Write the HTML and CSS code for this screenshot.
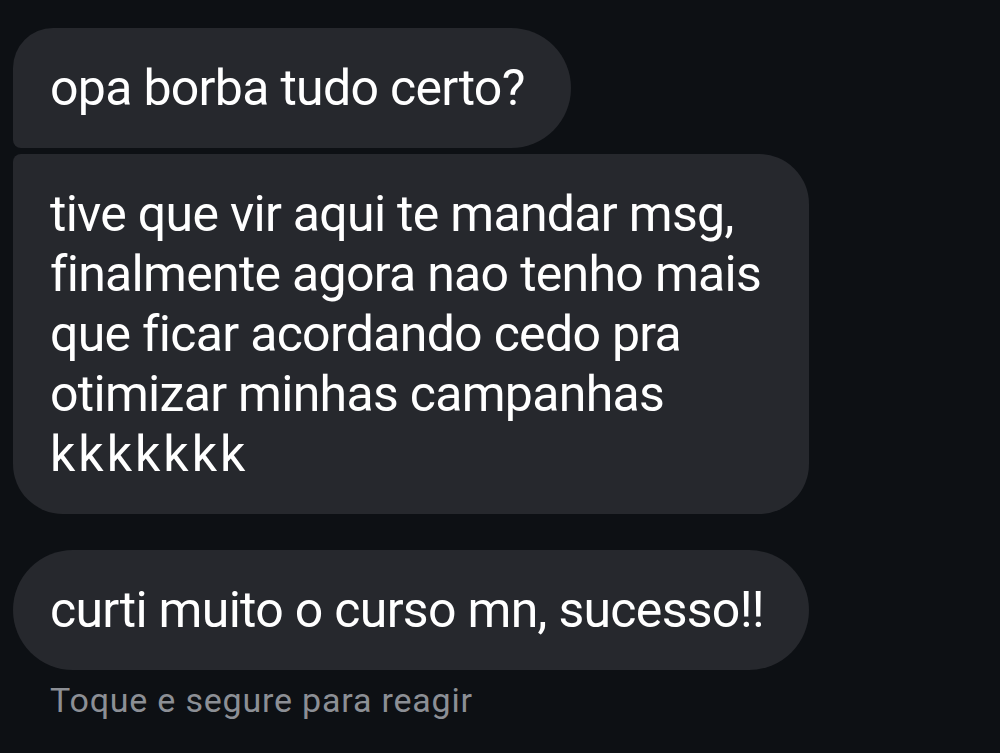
FILE: index.html
```html
<!DOCTYPE html>
<html lang="pt-BR">
<head>
<meta charset="utf-8">
<title>Mensagens</title>
<link rel="stylesheet" href="styles.css">
</head>
<body>
<main class="thread">
  <div class="group">
    <div class="bubble first">opa borba tudo certo?</div>
    <div class="bubble last wide">tive que vir aqui te mandar msg,<br>finalmente agora nao tenho mais<br>que ficar acordando cedo pra<br>otimizar minhas campanhas<br><span class="laugh">kkkkkkk</span></div>
  </div>
  <div class="group single">
    <div class="bubble solo">curti muito o curso mn, sucesso!!</div>
  </div>
  <p class="hint">Toque e segure para reagir</p>
</main>
</body>
</html>
```

FILE: styles.css
```css
html, body {
  margin: 0;
  padding: 0;
  background: #0d1014;
}
body {
  width: 1000px;
  height: 753px;
  overflow: hidden;
  font-family: Roboto, "Liberation Sans", sans-serif;
}
.thread {
  display: flex;
  flex-direction: column;
  align-items: flex-start;
  padding: 28px 0 0 13px;
}
.group {
  display: flex;
  flex-direction: column;
  align-items: flex-start;
  gap: 6px;
}
.single {
  margin-top: 36px;
}
.bubble {
  background: #26282d;
  color: #ffffff;
  font-size: 50px;
  line-height: 60px;
  letter-spacing: -0.7px;
  white-space: nowrap;
  padding: 30px 40px 30px 37px;
  border-radius: 60px;
  box-sizing: border-box;
}
.first {
  border-radius: 40px 60px 60px 8px;
  padding-right: 46px;
}
.last {
  border-radius: 8px 50px 50px 50px;
}
.laugh {
  letter-spacing: 3px;
}
.wide {
  width: 796px;
}
.solo {
  width: 796px;
}
.hint {
  margin: 8px 0 0 37px;
  color: #8c8f95;
  font-size: 34px;
  line-height: 44px;
  letter-spacing: 0.8px;
}
```
